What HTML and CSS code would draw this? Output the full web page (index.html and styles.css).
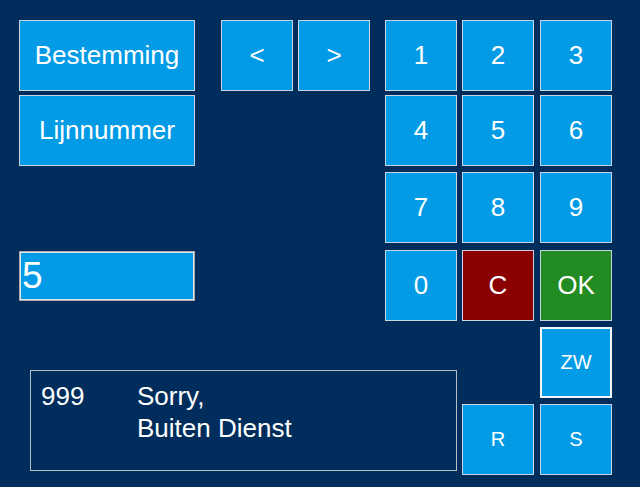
FILE: index.html
```html
<!DOCTYPE html>
<html lang="nl">
<head>
    <meta charset="UTF-8">
    <meta name="viewport" content="width=device-width, initial-scale=1.0">
    <title>Lijnkeuze</title>
    <link rel="stylesheet" href="styles.css">
</head>
<body>
    <div class="screen">
        <button class="key wide bestemming">Bestemming</button>
        <button class="key wide lijnnummer">Lijnnummer</button>
        <button class="key prev">&lt;</button>
        <button class="key next">&gt;</button>

        <button class="key k1">1</button>
        <button class="key k2">2</button>
        <button class="key k3">3</button>
        <button class="key k4">4</button>
        <button class="key k5">5</button>
        <button class="key k6">6</button>
        <button class="key k7">7</button>
        <button class="key k8">8</button>
        <button class="key k9">9</button>
        <button class="key k0">0</button>
        <button class="key clear">C</button>
        <button class="key ok">OK</button>
        <button class="key small zw">ZW</button>
        <button class="key small r">R</button>
        <button class="key small s">S</button>

        <input class="entry" type="text" value="5" readonly>

        <div class="display">
            <div class="line-nr">999</div>
            <div class="line-dest">Sorry,<br>Buiten Dienst</div>
        </div>
    </div>
</body>
</html>
```

FILE: styles.css
```css
body {
    margin: 0;
    background-color: #002d5b;
    font-family: "Liberation Sans", Arial, sans-serif;
    height: 100vh;
    overflow: hidden;
}

.screen {
    display: grid;
    grid-template-columns: 176px 26px 72px 5px 72px 15px 72px 5px 72px 6px 72px;
    grid-template-rows: 71px 4px 71px 6px 71px 7px 71px 6px 71px 6px 71px;
    padding: 20px 0 0 19px;
}

.key {
    margin: 0;
    padding: 0;
    background-color: #039be5;
    border: 1px solid #c9d6e2;
    color: #ffffff;
    font-family: inherit;
    font-size: 26px;
}

.small {
    font-size: 20px;
}

.bestemming { grid-column: 1; grid-row: 1; }
.lijnnummer { grid-column: 1; grid-row: 3; }
.prev { grid-column: 3; grid-row: 1; }
.next { grid-column: 5; grid-row: 1; }

.k1 { grid-column: 7; grid-row: 1; }
.k2 { grid-column: 9; grid-row: 1; }
.k3 { grid-column: 11; grid-row: 1; }
.k4 { grid-column: 7; grid-row: 3; }
.k5 { grid-column: 9; grid-row: 3; }
.k6 { grid-column: 11; grid-row: 3; }
.k7 { grid-column: 7; grid-row: 5; }
.k8 { grid-column: 9; grid-row: 5; }
.k9 { grid-column: 11; grid-row: 5; }
.k0 { grid-column: 7; grid-row: 7; }

.clear {
    grid-column: 9;
    grid-row: 7;
    background-color: #8b0000;
}

.ok {
    grid-column: 11;
    grid-row: 7;
    background-color: #228b22;
}

.zw {
    grid-column: 11;
    grid-row: 9;
    border: 2px solid #f2f6fa;
}

.r { grid-column: 9; grid-row: 11; }
.s { grid-column: 11; grid-row: 11; }

.entry {
    grid-column: 1;
    grid-row: 7;
    align-self: start;
    margin: 1px 0 0 0;
    height: 50px;
    box-sizing: border-box;
    padding: 0 0 0 2px;
    background-color: #039be5;
    border: 1px solid #a9a9a9;
    box-shadow: inset 0 0 0 1px #e6e6e6;
    color: #ffffff;
    font-family: inherit;
    font-size: 37px;
    outline: none;
}

.display {
    grid-column: 1 / 8;
    grid-row: 9 / 12;
    align-self: end;
    margin: 0 0 4px 11px;
    height: 101px;
    box-sizing: border-box;
    border: 1px solid #b4bcc6;
    padding: 9px 10px 0 10px;
    display: grid;
    grid-template-columns: 96px 1fr;
    color: #ffffff;
    font-size: 26px;
    line-height: 32px;
}
```
